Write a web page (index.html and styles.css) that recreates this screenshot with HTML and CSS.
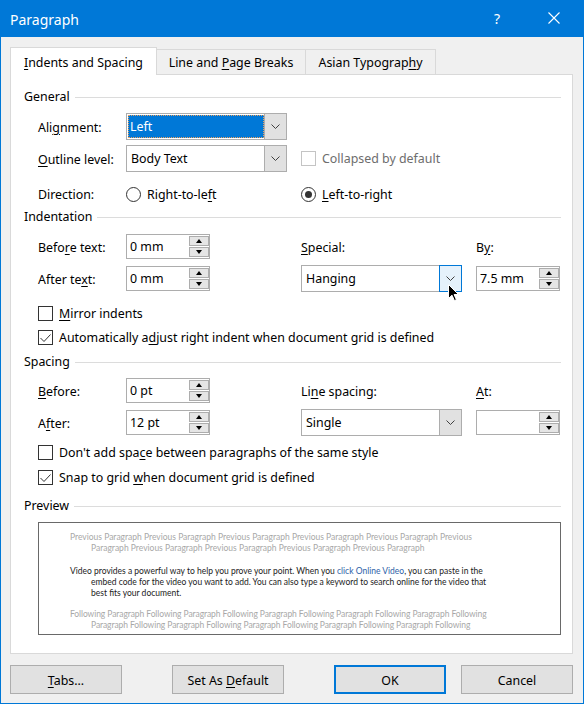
FILE: index.html
```html
<!DOCTYPE html>
<html>
<head>
<meta charset="utf-8">
<title>Paragraph</title>
<link rel="stylesheet" href="styles.css">
</head>
<body>
<div class="window">
  <div class="titlebar">
    <span class="title">Paragraph</span>
    <span class="help">?</span>
    <span class="close"><svg width="12" height="12" viewBox="0 0 12 12"><path d="M0.5 0.5L11.5 11.5M11.5 0.5L0.5 11.5" stroke="#fff" stroke-width="1.1" fill="none"/></svg></span>
  </div>
  <div class="content">
    <div class="tabs">
      <div class="tab active"><u>I</u>ndents and Spacing</div>
      <div class="tab t2">Line and <u>P</u>age Breaks</div>
      <div class="tab t3">Asian Typograp<u>h</u>y</div>
    </div>
    <div class="panel">
      <div class="group-head first">General</div>
      <div class="row r-align">
        <div class="lbl">Ali<u>g</u>nment:</div>
        <div class="select">
          <div class="val focus"><span class="sel">Left</span></div>
          <div class="drop"><svg width="9" height="5" viewBox="0 0 9 5"><path d="M0.5 0.5L4.5 4.5L8.5 0.5" fill="none" stroke="#404040"/></svg></div>
        </div>
      </div>
      <div class="row r-outline">
        <div class="lbl"><u>O</u>utline level:</div>
        <div class="select">
          <div class="val">Body Text</div>
          <div class="drop"><svg width="9" height="5" viewBox="0 0 9 5"><path d="M0.5 0.5L4.5 4.5L8.5 0.5" fill="none" stroke="#404040"/></svg></div>
        </div>
        <div class="opt gap14"><span class="cb dis"></span><span class="dis-text">Collapsed by default</span></div>
      </div>
      <div class="row r-dir">
        <div class="lbl">Direction:</div>
        <div class="opt w175"><span class="radio"></span><span>Right-to-le<u>f</u>t</span></div>
        <div class="opt"><span class="radio on"></span><span><u>L</u>eft-to-right</span></div>
      </div>

      <div class="group-head g-indent">Indentation</div>
      <div class="row r-spin1">
        <div class="lbl">Befo<u>r</u>e text:</div>
        <div class="spin"><div class="val">0 mm</div><div class="arrows"><span class="arr up"></span><span class="arr dn"></span></div></div>
        <div class="lbl2 gap91"><u>S</u>pecial:</div>
        <div class="lbl3">B<u>y</u>:</div>
      </div>
      <div class="row r-spin2">
        <div class="lbl">After te<u>x</u>t:</div>
        <div class="spin"><div class="val">0 mm</div><div class="arrows"><span class="arr up"></span><span class="arr dn"></span></div></div>
        <div class="select gap91">
          <div class="val">Hanging</div>
          <div class="drop hover"><svg width="9" height="5" viewBox="0 0 9 5"><path d="M0.5 0.5L4.5 4.5L8.5 0.5" fill="none" stroke="#404040"/></svg></div>
          <svg class="cursor" width="11" height="18" viewBox="0 0 11 18"><path d="M0.5 0.5V14.5L4 11.2L6.4 16.6L8.4 15.7L6.1 10.5H10.5Z" fill="#000" stroke="#fff" stroke-width="1" stroke-linejoin="round"/></svg>
        </div>
        <div class="spin gap14"><div class="val">7.5 mm</div><div class="arrows"><span class="arr up"></span><span class="arr dn"></span></div></div>
      </div>
      <div class="row r-check1">
        <div class="opt"><span class="cb"></span><span><u>M</u>irror indents</span></div>
      </div>
      <div class="row r-check2">
        <div class="opt"><span class="cb"><svg width="13" height="13" viewBox="0 0 13 13"><path d="M1.5 7L5 10.5L11.5 3.5" fill="none" stroke="#333" stroke-width="1"/></svg></span><span>Automatically a<u>d</u>just right indent when document grid is defined</span></div>
      </div>

      <div class="group-head g-spacing">Spacing</div>
      <div class="row r-sp1">
        <div class="lbl"><u>B</u>efore:</div>
        <div class="spin"><div class="val">0 pt</div><div class="arrows"><span class="arr up"></span><span class="arr dn"></span></div></div>
        <div class="lbl2 gap91">Li<u>n</u>e spacing:</div>
        <div class="lbl3"><u>A</u>t:</div>
      </div>
      <div class="row r-sp2">
        <div class="lbl">A<u>f</u>ter:</div>
        <div class="spin"><div class="val">12 pt</div><div class="arrows"><span class="arr up"></span><span class="arr dn"></span></div></div>
        <div class="select gap91">
          <div class="val">Single</div>
          <div class="drop"><svg width="9" height="5" viewBox="0 0 9 5"><path d="M0.5 0.5L4.5 4.5L8.5 0.5" fill="none" stroke="#404040"/></svg></div>
        </div>
        <div class="spin gap14"><div class="val"></div><div class="arrows"><span class="arr up"></span><span class="arr dn"></span></div></div>
      </div>
      <div class="row r-check3">
        <div class="opt"><span class="cb"></span><span>Don't add spa<u>c</u>e between paragraphs of the same style</span></div>
      </div>
      <div class="row r-check4">
        <div class="opt"><span class="cb"><svg width="13" height="13" viewBox="0 0 13 13"><path d="M1.5 7L5 10.5L11.5 3.5" fill="none" stroke="#333" stroke-width="1"/></svg></span><span>Snap to grid <u>w</u>hen document grid is defined</span></div>
      </div>

      <div class="group-head g-preview">Preview</div>
      <div class="preview">
        <div class="para grey">
          <div class="pline">Previous Paragraph Previous Paragraph Previous Paragraph Previous Paragraph Previous Paragraph Previous</div>
          <div class="pline ind">Paragraph Previous Paragraph Previous Paragraph Previous Paragraph Previous Paragraph</div>
        </div>
        <div class="para main">
          <div class="pline">Video provides a powerful way to help you prove your point. When you <span class="link">click Online Video</span>, you can paste in the</div>
          <div class="pline ind">embed code for the video you want to add. You can also type a keyword to search online for the video that</div>
          <div class="pline ind">best fits your document.</div>
        </div>
        <div class="para grey foll">
          <div class="pline">Following Paragraph Following Paragraph Following Paragraph Following Paragraph Following Paragraph Following</div>
          <div class="pline ind">Paragraph Following Paragraph Following Paragraph Following Paragraph Following Paragraph Following</div>
        </div>
      </div>
    </div>
    <div class="buttons">
      <div class="btn"><span><u>T</u>abs...</span></div>
      <div class="btn b-default"><span>Set As <u>D</u>efault</span></div>
      <div class="btn ok b-ok"><span>OK</span></div>
      <div class="btn b-cancel"><span>Cancel</span></div>
    </div>
  </div>
</div>
</body>
</html>
```

FILE: styles.css
```css
body {
  margin: 0;
  font-family: "Noto Sans", "Open Sans", sans-serif;
  font-size: 12.4px;
  color: #000;
}
u {
  text-decoration: underline;
  text-decoration-thickness: 1px;
  text-underline-offset: 2px;
}
.window {
  width: 584px;
  height: 704px;
  box-sizing: border-box;
  border: 1px solid #0078d7;
  border-top: 0;
  background: #f0f0f0;
}
.titlebar {
  height: 37px;
  background: #0078d7;
  color: #fff;
  display: flex;
  align-items: center;
  padding-left: 9px;
}
.title {
  flex: 1;
  font-size: 14px;
  padding-top: 1px;
}
.help {
  width: 20px;
  text-align: center;
  font-size: 14px;
}
.close {
  display: flex;
  width: 12px;
  height: 12px;
  margin-left: 41px;
  margin-right: 23px;
  margin-top: -1px;
}
.content {
  padding: 10px 10px 0 9px;
}
.tabs {
  display: flex;
  align-items: flex-end;
  height: 27px;
}
.tab {
  box-sizing: border-box;
  height: 25px;
  border: 1px solid #d9d9d9;
  border-bottom: 0;
  background: #f0f0f0;
  margin-left: -1px;
  text-align: center;
  padding-top: 2px;
  line-height: 22px;
}
.tab.active {
  width: 147px;
  height: 28px;
  margin-left: 0;
  margin-bottom: -1px;
  background: #fff;
  position: relative;
  z-index: 1;
  padding-top: 2px;
  line-height: 25px;
}
.tab.t2 { width: 150px; }
.tab.t3 { width: 131px; }
.panel {
  box-sizing: border-box;
  height: 580px;
  background: #fff;
  border: 1px solid #d9d9d9;
  padding: 0 11px 0 13px;
}
.group-head {
  display: flex;
  align-items: center;
  gap: 5px;
  height: 16px;
  line-height: 16px;
}
.group-head::after {
  content: "";
  flex: 1;
  height: 1px;
  background: #dcdcdc;
}
.group-head.first { margin-top: 14px; }
.group-head.g-indent { margin-top: 7px; }
.group-head.g-spacing { margin-top: 9px; }
.group-head.g-preview { margin-top: 13px; }
.row {
  display: flex;
  align-items: center;
  margin-left: 14px;
}
.r-align { margin-top: 8px; height: 27px; }
.r-outline { margin-top: 5px; height: 27px; }
.r-dir { margin-top: 14px; height: 16px; }
.r-spin1 { margin-top: 9px; height: 25px; }
.r-spin2 { margin-top: 6px; height: 27px; }
.r-check1 { margin-top: 13px; height: 16px; }
.r-check2 { margin-top: 8px; height: 16px; }
.r-sp1 { margin-top: 8px; height: 25px; }
.r-sp2 { margin-top: 6px; height: 27px; }
.r-check3 { margin-top: 8px; height: 16px; }
.r-check4 { margin-top: 9px; height: 16px; }
.lbl {
  width: 88px;
  flex: none;
  padding-top: 1px;
}
.lbl2 {
  width: 175px;
  flex: none;
  padding-top: 1px;
}
.lbl3 {
  padding-top: 1px;
}
.gap91 { margin-left: 91px; }
.gap14 { margin-left: 14px; }
.w175 { width: 175px; flex: none; }
.select {
  position: relative;
  box-sizing: border-box;
  display: flex;
  width: 161px;
  height: 27px;
  border: 1px solid #adadad;
  background: #fff;
  flex: none;
}
.select .val {
  flex: 1;
  padding-left: 4px;
  padding-top: 1px;
  line-height: 24px;
}
.select .val.focus {
  padding: 1px 0 1px 1px;
}
.sel {
  display: block;
  height: 23px;
  line-height: 24px;
  padding-left: 2px;
  background: #0078d7;
  color: #fff;
  outline: 1px dotted #e8a060;
  outline-offset: -1px;
}
.drop {
  box-sizing: border-box;
  width: 22px;
  background: #e1e1e1;
  border-left: 1px solid #adadad;
  display: flex;
  align-items: center;
  justify-content: center;
}
.drop.hover {
  width: 23px;
  margin: -1px -1px -1px 0;
  background: #e5f1fb;
  border: 1px solid #0078d7;
}
.cursor {
  position: absolute;
  left: 146px;
  top: 18px;
}
.spin {
  box-sizing: border-box;
  display: flex;
  width: 84px;
  height: 25px;
  border: 1px solid #adadad;
  background: #fff;
  flex: none;
}
.spin .val {
  flex: 1;
  padding-left: 3px;
  line-height: 23px;
}
.arrows {
  display: flex;
  flex-direction: column;
  gap: 1px;
  width: 20px;
  padding: 1px 0;
}
.arr {
  flex: 1;
  box-sizing: border-box;
  background: #e5e5e5;
  border: 1px solid #adadad;
  display: flex;
  align-items: center;
  justify-content: center;
}
.arr.up::before {
  content: "";
  border-left: 3.5px solid transparent;
  border-right: 3.5px solid transparent;
  border-bottom: 4px solid #000;
}
.arr.dn::before {
  content: "";
  border-left: 3.5px solid transparent;
  border-right: 3.5px solid transparent;
  border-top: 4px solid #000;
}
.opt {
  display: flex;
  align-items: center;
  gap: 6px;
}
.radio {
  box-sizing: border-box;
  width: 15px;
  height: 15px;
  border: 1px solid #333;
  border-radius: 50%;
  background: #fff;
  flex: none;
  display: flex;
  align-items: center;
  justify-content: center;
}
.radio.on::after {
  content: "";
  width: 7px;
  height: 7px;
  border-radius: 50%;
  background: #333;
}
.cb {
  box-sizing: border-box;
  width: 15px;
  height: 15px;
  border: 1px solid #333;
  background: #fff;
  flex: none;
  display: flex;
}
.cb.dis {
  border-color: #c4c4c4;
}
.dis-text {
  color: #6d6d6d;
}
.preview {
  box-sizing: border-box;
  margin: 8px 0 0 14px;
  height: 113px;
  border: 1px solid #696969;
  padding: 9px 0 0 31px;
  font-family: Lato, "Noto Sans", sans-serif;
  font-size: 8.5px;
  line-height: 11px;
  white-space: nowrap;
  overflow: hidden;
}
.pline.ind { margin-left: 21px; }
.para.grey { color: #a8a8a8; }
.para.main { margin-top: 12px; color: #222; }
.para.foll { margin-top: 10px; letter-spacing: -0.08px; }
.link { color: #2e5fa8; }
.buttons {
  display: flex;
  margin-top: 11px;
}
.btn {
  box-sizing: border-box;
  width: 112px;
  height: 29px;
  background: #e1e1e1;
  border: 1px solid #adadad;
  display: flex;
  align-items: center;
  justify-content: center;
  flex: none;
  padding-top: 1px;
}
.btn.ok { border: 2px solid #0078d7; }
.b-default { margin-left: 50px; }
.b-ok { margin-left: 50px; }
.b-cancel { margin-left: 15px; }
```
